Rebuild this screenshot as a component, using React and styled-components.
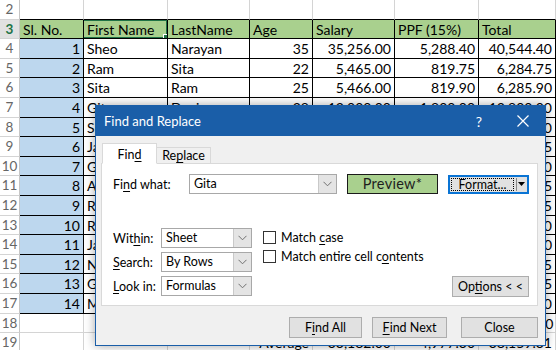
import React from "react";
import styled, { createGlobalStyle } from "styled-components";

const GlobalStyle = createGlobalStyle`
  html, body { margin: 0; padding: 0; background: #fff; overflow: hidden; }
`;

const COLS = [20, 64, 84, 82, 63, 82, 84, 77];
const GRID = "#d4d4d4";

const header = ["Sl. No.", "First Name", "LastName", "Age", "Salary", "PPF (15%)", "Total"];
const people = [
  ["Sheo", "Narayan", "35", "35,256.00", "5,288.40", "40,544.40"],
  ["Ram", "Sita", "22", "5,465.00", "819.75", "6,284.75"],
  ["Sita", "Ram", "25", "5,466.00", "819.90", "6,285.90"],
  ["Gita", "Devi", "28", "12,000.00", "1,800.00", "13,800.00"],
  ["Shyam", "Lal", "30", "20,000.00", "3,000.00", "23,000.00"],
  ["Jaya", "Prada", "27", "8,455.00", "1,268.25", "9,723.25"],
  ["Gopal", "Das", "41", "14,000.00", "2,100.00", "16,100.00"],
  ["Anil", "Kumar", "33", "7,255.00", "1,088.25", "8,343.25"],
  ["Ravi", "Shankar", "29", "9,125.00", "1,368.75", "10,493.75"],
  ["Rohit", "Verma", "38", "18,000.00", "2,700.00", "20,700.00"],
  ["Jatin", "Mehta", "24", "6,600.00", "990.00", "7,590.00"],
  ["Neha", "Singh", "26", "11,235.00", "1,685.25", "12,920.25"],
  ["Geeta", "Rani", "31", "5,555.00", "833.25", "6,388.25"],
  ["Mohan", "Lal", "45", "15,000.00", "2,250.00", "17,250.00"],
];

const buildRows = () => {
  const rows = [];
  rows.push({ n: 2, cells: ["", "", "", "", "", "", ""] });
  rows.push({ n: 3, cells: header, head: true });
  people.forEach((p, i) => rows.push({ n: i + 4, cells: [String(i + 1), ...p] }));
  rows.push({ n: 18, cells: ["", "", "", "", "", "", "250,446.00"] });
  rows.push({ n: 19, cells: ["", "", "", "Average", "33,182.00", "4,977.30", "38,159.31"] });
  return rows;
};

const inTable = (r, c) => r >= 3 && r <= 17 && c >= 1 && c <= 7;

const Page = styled.div`
  position: relative;
  width: 556px;
  height: 350px;
  overflow: hidden;
  background: #fff;
`;

const Sheet = styled.div`
  display: grid;
  grid-template-columns: ${COLS.map((w) => `${w}px`).join(" ")};
  grid-auto-rows: 19.6px;
  font-family: Lato, "Liberation Sans", sans-serif;
  font-size: 14px;
  color: #000;
`;

const Cell = styled.div`
  position: relative;
  box-sizing: border-box;
  border-right: 1px solid ${(p) => p.$right};
  border-bottom: 1px solid ${(p) => p.$bottom};
  background: ${(p) => p.$fill || "#fff"};
  text-align: ${(p) => p.$align || "left"};
  padding: 1px 3px 0;
  line-height: 18.6px;
  white-space: nowrap;
  overflow: hidden;
`;

const RowHead = styled.div`
  box-sizing: border-box;
  border-right: 1px solid #c6c6c6;
  border-bottom: 1px solid ${GRID};
  background: ${(p) => (p.$active ? "#e1e1e1" : "#fff")};
  color: ${(p) => (p.$active ? "#217346" : "#666")};
  font-weight: ${(p) => (p.$active ? 700 : 400)};
  font-size: 13.5px;
  text-align: center;
  line-height: 18.6px;
`;

const Selection = styled.div`
  position: absolute;
  inset: -1px -1px -1px -2px;
  border: 2px solid #217346;
  pointer-events: none;
  &::after {
    content: "";
    position: absolute;
    right: -4px;
    bottom: -4px;
    width: 5px;
    height: 5px;
    background: #217346;
    border: 1px solid #fff;
  }
`;

/* ---------- dialog ---------- */

const Dialog = styled.div`
  position: absolute;
  left: 95px;
  top: 105px;
  width: 451px;
  height: 241px;
  box-sizing: border-box;
  border: 1px solid #1a5ea8;
  background: #f0f0f0;
  box-shadow: 0 0 10px rgba(0, 0, 0, 0.35);
  font-family: Lato, "Liberation Sans", sans-serif;
  font-size: 12.5px;
  color: #000;
  display: flex;
  flex-direction: column;
`;

const TitleBar = styled.div`
  display: flex;
  align-items: center;
  height: 30px;
  background: #1a5ea8;
  color: #fff;
  padding-left: 8px;
  font-size: 13px;
`;

const TitleText = styled.div`
  flex: 1;
`;

const TitleButton = styled.div`
  width: 44px;
  height: 30px;
  display: flex;
  align-items: center;
  justify-content: center;
  font-size: 14px;
`;

const Body = styled.div`
  flex: 1;
  display: flex;
  flex-direction: column;
  padding: 7px 7px 0 5px;
`;

const Tabs = styled.div`
  display: flex;
  align-items: flex-end;
  margin-left: 1px;
  height: 21px;
  position: relative;
  z-index: 1;
`;

const Tab = styled.div`
  box-sizing: border-box;
  width: ${(p) => p.$w}px;
  height: ${(p) => (p.$active ? 21 : 17)}px;
  border: 1px solid #d9d9d9;
  border-bottom: ${(p) => (p.$active ? "1px solid #fff" : "1px solid #d9d9d9")};
  border-left: ${(p) => (p.$active ? "1px solid #d9d9d9" : "none")};
  background: ${(p) => (p.$active ? "#fff" : "#f0f0f0")};
  display: flex;
  align-items: center;
  justify-content: center;
  padding-top: ${(p) => (p.$active ? 2 : 0)}px;
`;

const Panel = styled.div`
  box-sizing: border-box;
  width: 437px;
  height: 143px;
  margin-top: -1px;
  border: 1px solid #d9d9d9;
  background: #fff;
  padding: 10px 8px 0 11px;
  display: flex;
  flex-direction: column;
`;

const FindRow = styled.div`
  display: flex;
  align-items: center;
  height: 20px;
`;

const Label = styled.div`
  width: ${(p) => p.$w}px;
  flex-shrink: 0;
`;

const Combo = styled.div`
  box-sizing: border-box;
  width: ${(p) => p.$w}px;
  height: 20px;
  border: 1px solid #a8a8a8;
  background: #fff;
  display: flex;
  align-items: stretch;
`;

const ComboText = styled.div`
  flex: 1;
  padding-left: 4px;
  line-height: 18px;
`;

const DropButton = styled.div`
  width: 17px;
  background: #e4e4e4;
  border-left: 1px solid #c9c9c9;
  display: flex;
  align-items: center;
  justify-content: center;
`;

const Preview = styled.div`
  box-sizing: border-box;
  width: 91px;
  height: 20px;
  margin-left: 10px;
  border: 1px solid #1a1a1a;
  background: #a9d08e;
  font-size: 14.5px;
  color: #1e1e1e;
  text-align: center;
  line-height: 18px;
  letter-spacing: 0.3px;
`;

const FormatButton = styled.div`
  box-sizing: border-box;
  width: 81px;
  height: 19px;
  margin-left: 10px;
  border: 2px solid #0a74d4;
  background: #e1e1e1;
  display: flex;
  align-items: stretch;
  padding: 1px;
`;

const FormatMain = styled.div`
  flex: 1;
  border: 1px dotted #000;
  text-align: center;
  line-height: 11px;
`;

const FormatArrow = styled.div`
  width: 9px;
  border-left: 1px solid #888;
  margin-left: 2px;
  display: flex;
  align-items: center;
  justify-content: center;
`;

const OptionsArea = styled.div`
  display: flex;
  margin-top: 34px;
`;

const SelectCol = styled.div`
  display: flex;
  flex-direction: column;
  gap: 4px;
`;

const CheckCol = styled.div`
  display: flex;
  flex-direction: column;
  gap: 6px;
  margin-left: 11px;
  padding-top: 3px;
`;

const CheckRow = styled.div`
  display: flex;
  align-items: center;
  gap: 5px;
  height: 13px;
`;

const Box = styled.div`
  box-sizing: border-box;
  width: 13px;
  height: 13px;
  border: 1px solid #333;
  background: #fff;
`;

const Button = styled.div`
  box-sizing: border-box;
  width: ${(p) => p.$w}px;
  height: 21px;
  border: 1px solid #adadad;
  background: #e1e1e1;
  text-align: center;
  line-height: 19px;
  margin-left: ${(p) => p.$ml || 0}px;
`;

const OptionsButton = styled(Button)`
  align-self: flex-end;
  margin-left: auto;
  margin-bottom: -1px;
`;

const Footer = styled.div`
  display: flex;
  justify-content: flex-end;
  width: 437px;
  margin-top: 11px;
`;

const U = styled.span`
  text-decoration: underline;
  text-underline-offset: 2px;
`;

const Chevron = () => (
  <svg width="9" height="6" viewBox="0 0 9 6">
    <polyline points="0.5,0.8 4.5,4.8 8.5,0.8" fill="none" stroke="#707070" strokeWidth="1" />
  </svg>
);

const SplitArrow = () => (
  <svg width="7" height="4" viewBox="0 0 7 4">
    <polygon points="0,0 7,0 3.5,4" fill="#000" />
  </svg>
);

const CloseIcon = () => (
  <svg width="12" height="12" viewBox="0 0 12 12">
    <path d="M0.5 0.5 L11.5 11.5 M11.5 0.5 L0.5 11.5" stroke="#fff" strokeWidth="1.2" />
  </svg>
);

const SelectBox = ({ label, value }) => (
  <FindRow>
    <Label $w={48}>{label}</Label>
    <Combo $w={91}>
      <ComboText>{value}</ComboText>
      <DropButton><Chevron /></DropButton>
    </Combo>
  </FindRow>
);

const FindReplaceDialog = () => (
  <Dialog>
    <TitleBar>
      <TitleText>Find and Replace</TitleText>
      <TitleButton>?</TitleButton>
      <TitleButton><CloseIcon /></TitleButton>
    </TitleBar>
    <Body>
      <Tabs>
        <Tab $active $w={55}><span>Fin<U>d</U></span></Tab>
        <Tab $w={54}><span>Re<U>p</U>lace</span></Tab>
      </Tabs>
      <Panel>
        <FindRow>
          <Label $w={76}>Fi<U>n</U>d what:</Label>
          <Combo $w={148}>
            <ComboText>Gita</ComboText>
            <DropButton><Chevron /></DropButton>
          </Combo>
          <Preview>Preview*</Preview>
          <FormatButton>
            <FormatMain>Format...</FormatMain>
            <FormatArrow><SplitArrow /></FormatArrow>
          </FormatButton>
        </FindRow>
        <OptionsArea>
          <SelectCol>
            <SelectBox label={<>Wit<U>h</U>in:</>} value="Sheet" />
            <SelectBox label={<><U>S</U>earch:</>} value="By Rows" />
            <SelectBox label={<><U>L</U>ook in:</>} value="Formulas" />
          </SelectCol>
          <CheckCol>
            <CheckRow><Box /><span>Match <U>c</U>ase</span></CheckRow>
            <CheckRow><Box /><span>Match entire cell c<U>o</U>ntents</span></CheckRow>
          </CheckCol>
          <OptionsButton $w={77}>Op<U>t</U>ions &lt; &lt;</OptionsButton>
        </OptionsArea>
      </Panel>
      <Footer>
        <Button $w={73}>F<U>i</U>nd All</Button>
        <Button $w={75} $ml={10}><U>F</U>ind Next</Button>
        <Button $w={77} $ml={14}>Close</Button>
      </Footer>
    </Body>
  </Dialog>
);

export default function App() {
  const rows = buildRows();
  return (
    <Page>
      <GlobalStyle />
      <Sheet>
        {rows.map((row) => (
          <React.Fragment key={row.n}>
            <RowHead $active={row.n === 3}>{row.n}</RowHead>
            {row.cells.map((text, i) => {
              const c = i + 1;
              const r = row.n;
              const right = inTable(r, c) || inTable(r, c + 1) ? "#000" : GRID;
              const bottom = inTable(r, c) || inTable(r + 1, c) ? "#000" : GRID;
              let fill;
              if (row.head) fill = "#a9d08e";
              else if (c === 1 && inTable(r, c)) fill = "#bdd7ee";
              const align = row.head || c === 2 || c === 3 ? "left" : "right";
              return (
                <Cell key={c} $right={right} $bottom={bottom} $fill={fill} $align={align}>
                  {text}
                  {r === 3 && c === 2 && <Selection />}
                </Cell>
              );
            })}
          </React.Fragment>
        ))}
      </Sheet>
      <FindReplaceDialog />
    </Page>
  );
}
